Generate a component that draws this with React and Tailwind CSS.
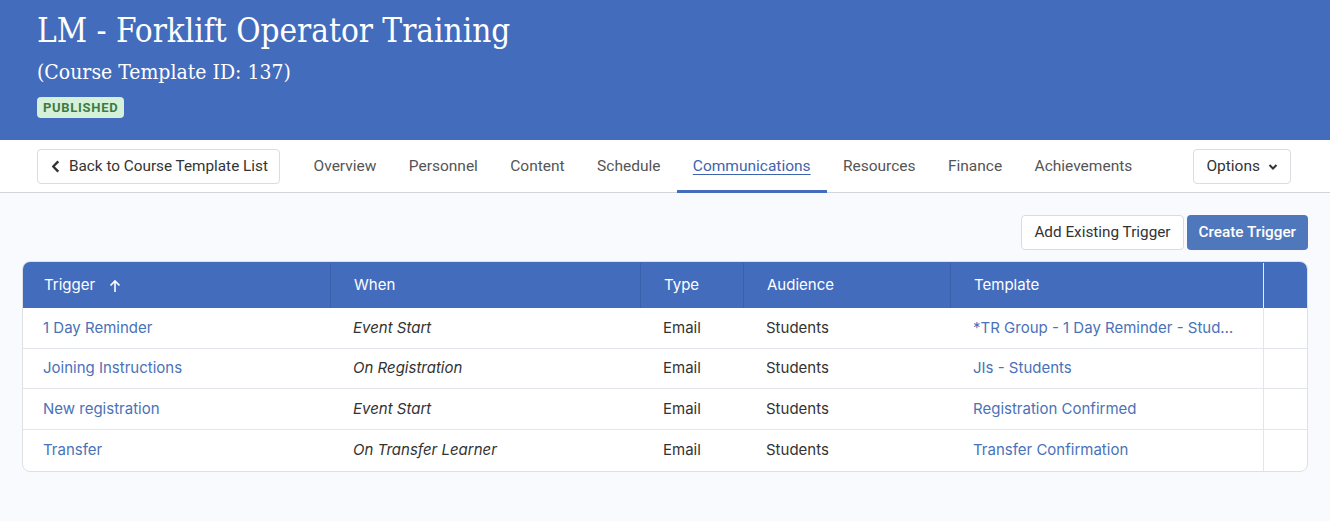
import React from "react";

const rows = [
  { t: "1 Day Reminder", w: "Event Start", ty: "Email", a: "Students", tp: "*TR Group - 1 Day Reminder - Students" },
  { t: "Joining Instructions", w: "On Registration", ty: "Email", a: "Students", tp: "JIs - Students" },
  { t: "New registration", w: "Event Start", ty: "Email", a: "Students", tp: "Registration Confirmed" },
  { t: "Transfer", w: "On Transfer Learner", ty: "Email", a: "Students", tp: "Transfer Confirmation" },
];

const tabs = ["Overview", "Personnel", "Content", "Schedule", "Communications", "Resources", "Finance", "Achievements"];

const slab = { fontFamily: "'DejaVu Serif Condensed', 'DejaVu Serif', 'Liberation Serif', serif", fontStretch: "condensed" };

export default function App() {
  return (
    <div className="min-h-[521px] bg-[#f9fafd]" style={{ fontFamily: "Roboto, 'Noto Sans', sans-serif" }}>
      <header className="h-[140px] bg-[#436cbd] pl-[37px] pt-[10px] text-white">
        <h1 className="text-[33px] leading-[42px] font-normal" style={slab}>
          LM - Forklift Operator Training
        </h1>
        <div className="mt-[7px] text-[21px] leading-[26px]" style={slab}>
          (Course Template ID: 137)
        </div>
        <div className="mt-[12px] inline-flex h-[21px] items-center rounded-[4px] bg-[#d6f1da] px-[6px] text-[13px] font-bold tracking-[0.7px] text-[#3f7a43]">
          PUBLISHED
        </div>
      </header>

      <nav className="flex h-[53px] items-center border-b border-[#d3d5d9] bg-white pl-[37px] pr-[39px]">
        <button className="flex h-[35px] items-center gap-[9px] rounded-[4px] border border-[#d9dce1] pl-[13px] pr-[11px] pt-[1px] text-[15.3px] text-[#333]">
          <svg width="9" height="13" viewBox="0 0 9 14" className="mt-[-1px]"><path d="M7.5 1.5 L2 7 L7.5 12.5" fill="none" stroke="#333" strokeWidth="2.6" strokeLinejoin="round" /></svg>
          Back to Course Template List
        </button>
        <div className="ml-[17.5px] flex h-full">
          {tabs.map((t) => (
            <div key={t} className={"relative flex h-full items-center px-[16.2px] pt-[1px] text-[15.5px] " + (t === "Communications" ? "text-[#3e64ad] underline underline-offset-[3px]" : "text-[#555]")}>
              {t}
              {t === "Communications" && <div className="absolute bottom-[-1px] left-0 right-0 h-[3px] bg-[#436cbd]" />}
            </div>
          ))}
        </div>
        <button className="ml-auto flex h-[35px] items-center gap-[8px] rounded-[4px] border border-[#d9dce1] px-[12px] pt-[1px] text-[15.5px] text-[#333]">
          Options
          <svg width="10" height="8" viewBox="0 0 10 8"><path d="M1.5 2 L5 5.5 L8.5 2" fill="none" stroke="#333" strokeWidth="2" /></svg>
        </button>
      </nav>

      <div className="px-[22px] pt-[22px]">
        <div className="flex justify-end gap-[3px]">
          <button className="h-[35px] rounded-[4px] border border-[#d9dce1] bg-white px-[12px] text-[15.3px] text-[#333]">Add Existing Trigger</button>
          <button className="h-[35px] rounded-[4px] bg-[#4f78bc] px-[12px] text-[15.3px] font-medium text-white">Create Trigger</button>
        </div>

        <div className="mt-[11px] overflow-hidden rounded-[8px] border border-[#dde1e7] bg-white" style={{ fontFamily: "Inter, Roboto, sans-serif" }}>
          <div className="grid h-[46px] grid-cols-[308px_310px_103px_207px_313px_1fr] bg-[#436cbd] pt-[1px] text-[15px] text-white">
            <div className="flex items-center gap-[14px] border-r border-[#3a60aa] pl-[21px]">
              Trigger
              <svg width="12" height="14" viewBox="0 0 12 14"><path d="M6 13 V2 M1.5 6.5 L6 2 L10.5 6.5" fill="none" stroke="white" strokeWidth="1.6" /></svg>
            </div>
            <div className="flex items-center border-r border-[#3a60aa] pl-[23px]">When</div>
            <div className="flex items-center border-r border-[#3a60aa] pl-[23px]">Type</div>
            <div className="flex items-center border-r border-[#3a60aa] pl-[23px]">Audience</div>
            <div className="flex items-center border-r border-[#e8ecf3] pl-[23px]">Template</div>
            <div />
          </div>
          {rows.map((r, i) => (
            <div key={i} className={"grid h-[40.7px] grid-cols-[308px_310px_103px_207px_313px_1fr] text-[15px] " + (i < rows.length - 1 ? "border-b border-[#e2e6ec]" : "")}>
              <div className="flex items-center pl-[20px] text-[#4a72b8]">{r.t}</div>
              <div className="flex items-center pl-[22px] italic text-[#333]">{r.w}</div>
              <div className="flex items-center pl-[22px] text-[#333]">{r.ty}</div>
              <div className="flex items-center pl-[22px] text-[#333]">{r.a}</div>
              <div className="flex min-w-0 items-center border-r border-[#e2e6ec] pl-[22px] pr-[28px] text-[#4a72b8]">
                <span className="truncate" title={r.tp}>{r.tp}</span>
              </div>
              <div />
            </div>
          ))}
        </div>
      </div>
    </div>
  );
}
